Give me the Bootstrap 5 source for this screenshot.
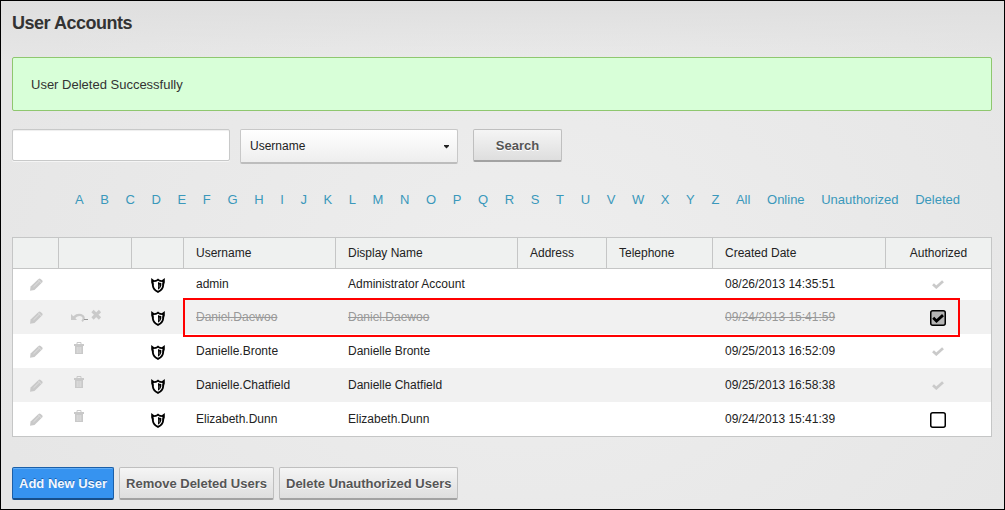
<!DOCTYPE html>
<html lang="en">
<head>
<meta charset="utf-8">
<title>User Accounts</title>
<link href="https://cdn.jsdelivr.net/npm/bootstrap@5.3.0/dist/css/bootstrap.min.css" rel="stylesheet">
<style>
html,body{height:510px;overflow:hidden}
body{font:12px/18px "Liberation Sans",Arial,sans-serif;color:#222}
.page{height:510px;border:1px solid #000;padding:0 12px 0 11px;
 background:linear-gradient(#dfdfdf,rgba(228,228,228,0) 60px),radial-gradient(ellipse 560px 430px at 52% 55%,#eee,#e6e6e6)}
h1{font-size:18px;line-height:24px;font-weight:bold;color:#333;margin:0;padding-top:10px;height:56px;letter-spacing:-.48px}
.alert.ok{height:54px;margin:0;padding:18px;border:1px solid #8fc76f;border-radius:2px;background:#d8ffd8;color:#333;font-size:13px;line-height:17px}
.tools{margin-top:18px;height:36px}
.form-control.query{width:218px;height:32px;border:1px solid #c8c9c9;border-radius:2px;box-shadow:inset 0 1px 1px #eee,0 1px 0 #f5f5f5;padding:4px 8px;font-size:12px}
.btn.pick{width:218px;height:35px;margin-left:10px;padding:0 7px 1px 9px;border:1px solid #c8c8c8;border-bottom:2px solid #bdbdbd;border-radius:2px;background:linear-gradient(#fff,#eee);font-size:12px;line-height:18px;color:#222}
.pick svg{margin-top:3px}
.btn.grey,.btn.blue{height:33px;padding:1px 6px 0;border-radius:2px;font-size:13px;line-height:17px;font-weight:bold;white-space:nowrap}
.btn.grey{border:1px solid #bfbfbf;border-bottom:2px solid #a2a2a2;background:linear-gradient(#f5f5f5,#dedede);color:#555;text-shadow:0 1px 0 #fff}
.btn.blue{border:1px solid #1b5fa8;border-bottom:2px solid #174f8b;background:#3693f0;color:#f2f7ff;text-shadow:0 -1px 0 #1b62ad;box-shadow:inset 0 1px 0 #62aef7}
.btn.find{width:89px;margin-left:15px}
.letters{margin:26px 32px 0 63px;height:18px;font-size:13px;line-height:17px}
.letters a{color:#3a98bb;text-decoration:none}
.table.users{width:980px;table-layout:fixed;margin:28px 0 0;border-collapse:separate;border-spacing:0;border:1px solid #c5c6c6;color:#222;background:#fff}
.users>thead>tr>th{height:31px;padding:0 0 1px 12px;border:0;border-right:1px solid #c5c6c6;border-bottom:1px solid #c5c6c6;background:#eff1f0;font-weight:normal;vertical-align:middle;color:#222}
.users>thead>tr>th:last-child{border-right:0}
.users>tbody>tr>td{height:34px;padding:0 0 0 12px;border:0;vertical-align:middle;background:#fff;line-height:18px;color:#222;box-shadow:none}
.users>tbody>tr:first-child>td{height:31px;padding-bottom:1px}
.users>tbody>tr:nth-child(even)>td{background:#f1f1f1}
.users>tbody>tr.gone>td{color:#999;text-decoration:line-through}
.users>thead>tr>th.auth,.users>tbody>tr>td.auth{padding-left:0;text-align:center}
.users svg{display:block}
.users .pen{margin:1px 0 0 5px}
.users .bin{margin:-6px 0 0 3px}
.users .sh{margin:2px 0 0 7px}
.users .tick,.users .box{position:relative;left:-1px;margin:2px auto 0}
.users .tick{margin-top:1px}
.marker{position:absolute;left:183px;top:298px;width:777px;height:39px;border:2px solid #f00;pointer-events:none}
.actions{margin-top:30px;gap:5px}
</style>
</head>
<body>
<svg class="d-none">
 <symbol id="pen" viewBox="0 0 13 13"><path d="M0 12.800l.6-4.300L8.500.9q1.100-1 2.200 0l1.400 1.400q1 1.100 0 2.200L4.500 12z" fill="#c9c9c9"/><path d="M3.500 8.900L9.300 3.200M8 1.600l3.400 3.400" stroke="#eee" stroke-width=".6"/></symbol>
 <symbol id="bin" viewBox="0 0 10 12"><path d="M3 2V.5h4V2" fill="none" stroke="#c9c9c9"/><path d="M0 2h10v2H0zM1 4h8v8H1z" fill="#c9c9c9"/><path d="M3.200 5v6M5 5v6M6.800 5v6" stroke="#eee" stroke-width=".6"/></symbol>
 <symbol id="shield" viewBox="0 0 14 15"><path d="M.2 0L3.200 2.200Q5.700 2 7 .5 8.300 2 10.800 2.200L13.800 0V4.500Q13 6 13 8 12.500 12.500 7 14.900 1.500 12.500 1 8 1 6 .2 4.500z"/><path d="M2.500 4Q5.500 4 7 2.700 8.500 4 11.500 4 10.900 6 11.200 7.800 10.500 11.300 7 12.800 3.500 11.300 2.800 7.800 3.100 6 2.500 4z" fill="#fff"/><path d="M7 4Q8.500 5.100 10.300 5.100V7.800Q9.500 10.500 7 11.800z"/><path d="M8.200 6.500v3" stroke="#aaa" stroke-width=".6"/></symbol>
 <symbol id="tick" viewBox="0 0 12 9"><path d="M1 4.200l3.300 3L11 1.300" fill="none" stroke="#cacaca" stroke-width="2.800"/></symbol>
</svg>
<main class="page">
 <h1>User Accounts</h1>
 <div class="alert ok">User Deleted Successfully</div>
 <div class="tools d-flex align-items-start">
  <input class="form-control query" type="text" aria-label="Search users">
  <button class="btn pick d-flex align-items-center justify-content-between" type="button">Username<svg width="7" height="4" viewBox="0 0 7 4"><path d="M1 0h5v1L3.500 3.500 1 1z" fill="#222"/></svg></button>
  <button class="btn grey find" type="button">Search</button>
 </div>
 <nav class="letters d-flex justify-content-between">
  <a href="#">A</a><a href="#">B</a><a href="#">C</a><a href="#">D</a><a href="#">E</a><a href="#">F</a><a href="#">G</a><a href="#">H</a><a href="#">I</a><a href="#">J</a><a href="#">K</a><a href="#">L</a><a href="#">M</a><a href="#">N</a><a href="#">O</a><a href="#">P</a><a href="#">Q</a><a href="#">R</a><a href="#">S</a><a href="#">T</a><a href="#">U</a><a href="#">V</a><a href="#">W</a><a href="#">X</a><a href="#">Y</a><a href="#">Z</a><a href="#">All</a><a href="#">Online</a><a href="#">Unauthorized</a><a href="#">Deleted</a>
 </nav>
 <table class="table users">
  <colgroup><col style="width:46px"><col style="width:73px"><col style="width:52px"><col style="width:152px"><col style="width:182px"><col style="width:89px"><col style="width:106px"><col style="width:173px"><col style="width:105px"></colgroup>
  <thead><tr><th></th><th></th><th></th><th>Username</th><th>Display Name</th><th>Address</th><th>Telephone</th><th>Created Date</th><th class="auth">Authorized</th></tr></thead>
  <tbody>
   <tr><td><svg class="pen" width="13" height="13"><use href="#pen"/></svg></td><td></td><td><svg class="sh" width="14" height="15"><use href="#shield"/></svg></td><td>admin</td><td>Administrator Account</td><td></td><td></td><td>08/26/2013 14:35:51</td><td class="auth"><svg class="tick" width="12" height="9"><use href="#tick"/></svg></td></tr>
   <tr class="gone"><td><svg class="pen" width="13" height="13"><use href="#pen"/></svg></td><td><svg width="32" height="16" viewBox="0 0 32 16"><path d="M0 5v6h6L4.300 9.100Q7 6.500 10 7.300q3 1.500.4 4.500l1.400 1.200Q15.500 9 12.500 6.300 7.500 3 2.300 7.200z" fill="#cacaca"/><path d="M13 10.500h4" stroke="#999"/><path d="M21.500 2l7.500 7.500M29 2L21.500 9.500" stroke="#cacaca" stroke-width="3.200"/></svg></td><td><svg class="sh" width="14" height="15"><use href="#shield"/></svg></td><td>Daniel.Daewoo</td><td>Daniel.Daewoo</td><td></td><td></td><td>09/24/2013 15:41:59</td><td class="auth"><svg class="box" width="16" height="16"><rect x=".75" y=".75" width="14.500" height="14.500" rx="2" fill="#b5b5b5" stroke="#000" stroke-width="1.500"/><path d="M3.200 7.800l3.300 3.300 6.500-6" fill="none" stroke="#000" stroke-width="2.800"/></svg></td></tr>
   <tr><td><svg class="pen" width="13" height="13"><use href="#pen"/></svg></td><td><svg class="bin" width="10" height="12"><use href="#bin"/></svg></td><td><svg class="sh" width="14" height="15"><use href="#shield"/></svg></td><td>Danielle.Bronte</td><td>Danielle Bronte</td><td></td><td></td><td>09/25/2013 16:52:09</td><td class="auth"><svg class="tick" width="12" height="9"><use href="#tick"/></svg></td></tr>
   <tr><td><svg class="pen" width="13" height="13"><use href="#pen"/></svg></td><td><svg class="bin" width="10" height="12"><use href="#bin"/></svg></td><td><svg class="sh" width="14" height="15"><use href="#shield"/></svg></td><td>Danielle.Chatfield</td><td>Danielle Chatfield</td><td></td><td></td><td>09/25/2013 16:58:38</td><td class="auth"><svg class="tick" width="12" height="9"><use href="#tick"/></svg></td></tr>
   <tr><td><svg class="pen" width="13" height="13"><use href="#pen"/></svg></td><td><svg class="bin" width="10" height="12"><use href="#bin"/></svg></td><td><svg class="sh" width="14" height="15"><use href="#shield"/></svg></td><td>Elizabeth.Dunn</td><td>Elizabeth.Dunn</td><td></td><td></td><td>09/24/2013 15:41:39</td><td class="auth"><svg class="box" width="16" height="16"><rect x=".75" y=".75" width="14.500" height="14.500" rx="2" fill="#fff" stroke="#000" stroke-width="1.500"/></svg></td></tr>
  </tbody>
 </table>
 <div class="actions d-flex">
  <button class="btn blue" style="width:102px" type="button">Add New User</button>
  <button class="btn grey" style="width:155px" type="button">Remove Deleted Users</button>
  <button class="btn grey" style="width:179px" type="button">Delete Unauthorized Users</button>
 </div>
</main>
<div class="marker"></div>
<script src="https://cdn.jsdelivr.net/npm/bootstrap@5.3.0/dist/js/bootstrap.bundle.min.js"></script>
</body>
</html>
